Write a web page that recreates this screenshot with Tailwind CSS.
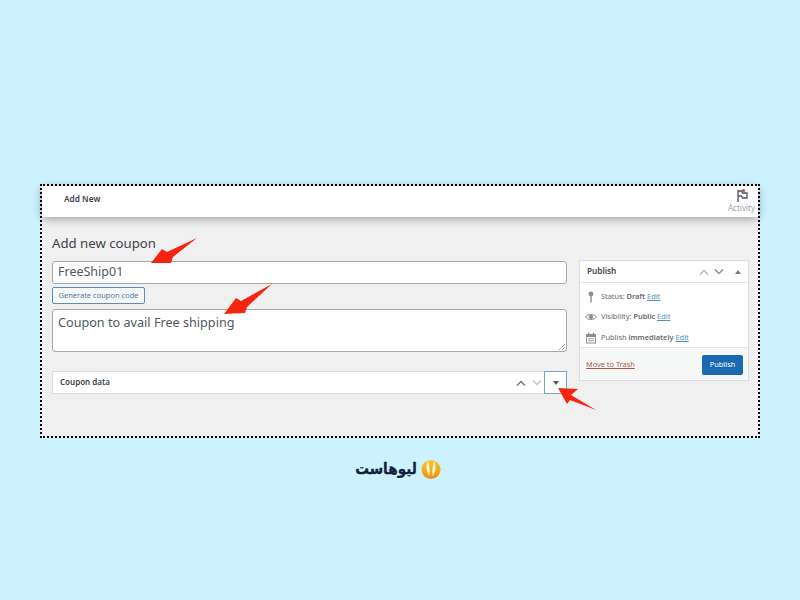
<!DOCTYPE html>
<html lang="en">
<head>
    <meta charset="UTF-8">
    <title>Add new coupon</title>
    <script src="https://cdn.jsdelivr.net/npm/@tailwindcss/browser@4"></script>
</head>
<body class="bg-[#cdf2ff] font-['Noto_Sans',sans-serif] w-[800px] h-[600px] overflow-hidden">
    <div class="pt-[184px] px-10">
        <!-- Framed screenshot -->
        <div class="relative w-[720px] h-[254px] border-2 border-dotted border-black bg-[#f0f0f1]">
            <!-- Top bar -->
            <div class="h-[31px] bg-white shadow-[0_2px_10px_rgba(0,0,0,0.35)] flex items-center justify-between pl-[22px] pr-[3px]">
                <span class="text-[8.3px] font-semibold text-[#3c434a] mt-[-5px]">Add New</span>
                <div class="flex flex-col items-center mt-[-3px]">
                    <svg class="w-[14px] h-[15px]" viewBox="0 0 14 15" fill="none" stroke="#50575e" stroke-width="1.3">
                        <path d="M3 2v12M3 3h3.5l1 2H12v5H7.5l-1-2H3"/>
                        <circle cx="8.5" cy="2.5" r="1.6" fill="#c0504d" stroke="none"/>
                    </svg>
                    <span class="text-[8px] leading-[10px] text-[#a0a3a8]">Activity</span>
                </div>
            </div>

            <div class="flex gap-[12px] pl-[10px] pt-[18px]">
                <!-- Main column -->
                <div class="w-[515px]">
                    <h1 class="text-[13.2px] leading-[16px] text-[#3c434a]">Add new coupon</h1>
                    <div class="mt-[10px] h-[23px] bg-white border border-[#a7aaad] rounded-[3px] flex items-center px-[5px] text-[12.5px] text-[#50575e]">FreeShip01</div>
                    <div class="mt-[3px] w-[93px] h-[17px] border border-[#5b8db8] rounded-[2px] bg-[#f6f7f7] flex items-center justify-center text-[7.5px] text-[#4f7ea6]">Generate coupon code</div>
                    <div class="mt-[5px] h-[43px] bg-white border border-[#a7aaad] rounded-[3px] px-[5px] pt-[3px] text-[12.65px] leading-[18px] text-[#50575e] relative">
                        Coupon to avail Free shipping
                        <svg class="absolute right-[1px] bottom-[1px] w-[6px] h-[6px]" viewBox="0 0 6 6" stroke="#8c8f94" stroke-width="0.8"><path d="M0 6L6 0M3 6L6 3"/></svg>
                    </div>
                    <!-- Coupon data box -->
                    <div class="mt-[19px] h-[23px] bg-white border border-[#dcdcde] flex items-center text-[8px] font-semibold text-[#3c434a]">
                        <span class="pl-[7px] flex-1 mt-[-1px]">Coupon data</span>
                        <svg class="w-[10px] h-[6px] mr-[6px]" viewBox="0 0 10 6" fill="none" stroke="#787c82" stroke-width="1.5"><path d="M1 5.500L5 1.500L9 5.500"/></svg>
                        <svg class="w-[10px] h-[6px] mr-[2px]" viewBox="0 0 10 6" fill="none" stroke="#c3c4c7" stroke-width="1.5"><path d="M1 .5L5 4.500L9 .5"/></svg>
                        <div class="w-[23px] h-[23px] border border-[#7ba7cf] flex items-center justify-center mr-[-1px]">
                            <span class="w-0 h-0 border-x-[3px] border-x-transparent border-t-[4px] border-t-[#50575e]"></span>
                        </div>
                    </div>
                </div>

                <!-- Publish box -->
                <div class="w-[170px] h-[121px] mt-[25px] bg-white border border-[#dcdcde] text-[7.4px] text-[#646970]">
                    <div class="h-[22px] border-b border-[#e5e5e5] flex items-center pl-[7px] pr-[7px]">
                        <span class="flex-1 text-[8.2px] font-semibold text-[#3c434a]">Publish</span>
                        <svg class="w-[10px] h-[6px] mr-[5px]" viewBox="0 0 10 6" fill="none" stroke="#b4b9be" stroke-width="1.4"><path d="M1 5.500L5 1.500L9 5.500"/></svg>
                        <svg class="w-[10px] h-[6px] mr-[11px]" viewBox="0 0 10 6" fill="none" stroke="#8c8f94" stroke-width="1.4"><path d="M1 .5L5 4.500L9 .5"/></svg>
                        <span class="w-0 h-0 border-x-[3px] border-x-transparent border-b-[4px] border-b-[#787c82]"></span>
                    </div>
                    <div class="flex flex-col gap-[8.5px] pt-[7.5px] pl-[5px] h-[64px]">
                        <div class="flex items-center gap-[4px] h-[12px]">
                            <svg class="w-[12px] h-[12px]" viewBox="0 0 12 12" fill="#8c8f94"><circle cx="6" cy="3" r="2.400"/><rect x="5.300" y="4" width="1.400" height="7.500"/></svg>
                            <span>Status: <b class="font-semibold">Draft</b> <a class="underline text-[#4f8fc4]">Edit</a></span>
                        </div>
                        <div class="flex items-center gap-[4px] h-[12px]">
                            <svg class="w-[12px] h-[12px]" viewBox="0 0 12 12" fill="none" stroke="#8c8f94"><path d="M.5 6C3 2.500 9 2.500 11.500 6C9 9.500 3 9.500 .5 6Z"/><circle cx="6" cy="6" r="1.800" fill="#8c8f94"/></svg>
                            <span>Visibility: <b class="font-semibold">Public</b> <a class="underline text-[#4f8fc4]">Edit</a></span>
                        </div>
                        <div class="flex items-center gap-[4px] h-[12px]">
                            <svg class="w-[12px] h-[12px]" viewBox="0 0 12 12" fill="#8c8f94"><path d="M1 2h10v9.500H1zM2 5v5.500h8V5z" fill-rule="evenodd"/><rect x="3" y=".5" width="1.200" height="2.500"/><rect x="7.800" y=".5" width="1.200" height="2.500"/><rect x="3.500" y="6" width="1.300" height="1.300"/><rect x="5.400" y="6" width="1.300" height="1.300"/><rect x="7.300" y="6" width="1.300" height="1.300"/><rect x="3.500" y="8" width="1.300" height="1.300"/><rect x="5.400" y="8" width="1.300" height="1.300"/><rect x="7.300" y="8" width="1.300" height="1.300"/></svg>
                            <span>Publish <b class="font-semibold">immediately</b> <a class="underline text-[#4f8fc4]">Edit</a></span>
                        </div>
                    </div>
                    <div class="h-[33px] bg-[#f6f7f7] border-t border-[#e5e5e5] flex items-center justify-between pl-[6px] pr-[5px] pt-[2px]">
                        <a class="underline text-[#b0574f]">Move to Trash</a>
                        <div class="w-[41px] h-[20px] rounded-[2px] bg-[#1a6ab0] text-white flex items-center justify-center">Publish</div>
                    </div>
                </div>
            </div>

            <!-- Red annotation arrows -->
            <svg class="absolute left-[-2px] top-[-2px] w-[720px] h-[254px] pointer-events-none" viewBox="0 0 720 254" fill="#f4260f">
                <path d="M157 54L127 68L122 65L111 79L131 79L133 73Z"/>
                <path d="M232 100L201 117L196 114L184 130L205 129L207 123Z"/>
                <path d="M556 226L531 211L538 205L518 204L527 220L530 216Z"/>
            </svg>
        </div>

        <!-- Logo -->
        <div class="mt-[21px] flex items-center justify-center gap-[6px] h-[20px] ml-[-2px]">
            <div class="w-[58px] flex justify-center">
                <span dir="rtl" class="shrink-0 whitespace-nowrap scale-x-[0.88] [-webkit-text-stroke:0.3px_#14213d] font-['DejaVu_Sans',sans-serif] font-bold text-[15.5px] leading-[20px] text-[#14213d]">لیوهاست</span>
            </div>
            <svg class="w-[20px] h-[19px]" viewBox="0 0 20 19">
                <defs>
                    <linearGradient id="logoFill" x1="0" y1="0" x2="0" y2="1">
                        <stop offset="0" stop-color="#fbc62e"/>
                        <stop offset="1" stop-color="#ee8f12"/>
                    </linearGradient>
                </defs>
                <circle cx="10" cy="9.500" r="9.500" fill="url(#logoFill)"/>
                <path d="M7 1C4.500 5 5 12 8.500 16C9.200 11 8.500 5 7 1ZM13 1C15.500 5 15 12 11.500 16C10.800 11 11.500 5 13 1Z" fill="#fff2c4"/>
            </svg>
        </div>
    </div>
</body>
</html>
